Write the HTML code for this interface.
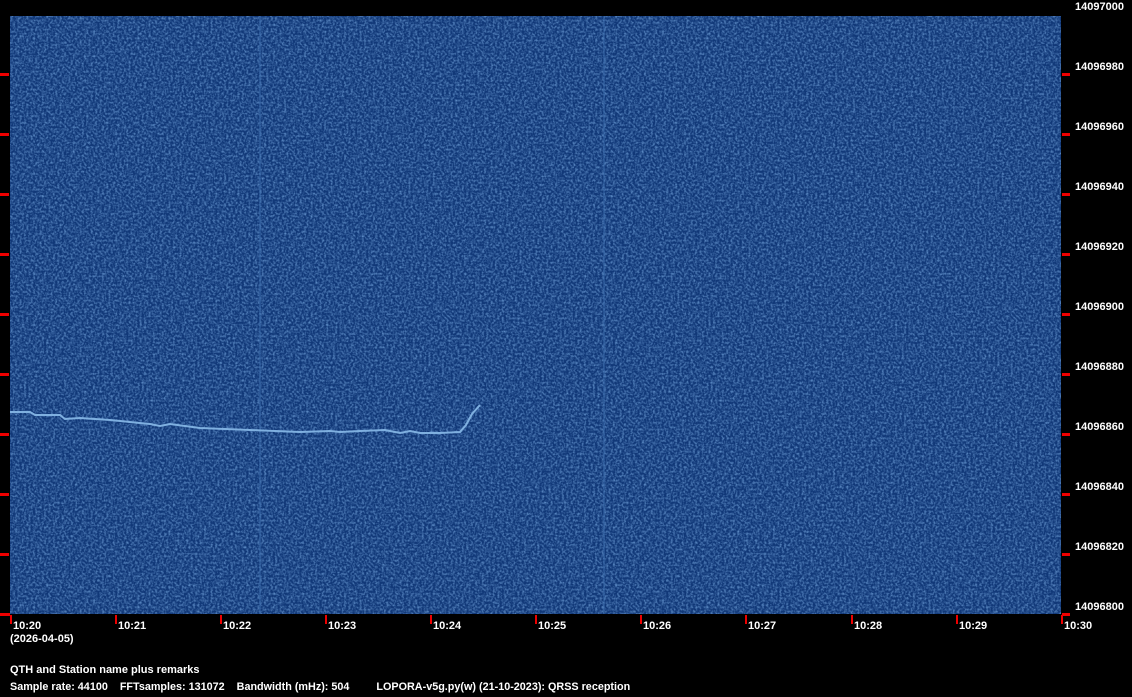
<!DOCTYPE html>
<html><head><style>
html,body{margin:0;padding:0;background:#000;width:1132px;height:697px;overflow:hidden}
.t{position:absolute;color:#fff;font:bold 11px "Liberation Sans",sans-serif;white-space:pre;line-height:12px}
</style></head><body>
<svg width="1132" height="697" style="position:absolute;left:0;top:0">
<defs>
<filter id="n" x="0" y="0" width="100%" height="100%">
<feTurbulence type="fractalNoise" baseFrequency="0.45" numOctaves="2" seed="3"/>
<feColorMatrix type="matrix" values="0 0 0 0 0.2  0 0 0 0 0.42  0 0 0 0 0.78  2 0 0 0 -0.75"/>
</filter>
</defs>
<rect x="10" y="16" width="1051" height="598" fill="#113878"/>
<rect x="10" y="16" width="1051" height="598" filter="url(#n)" opacity="0.7"/>
<line x1="260" y1="16" x2="260" y2="614" stroke="#3f70b0" stroke-width="1.5" opacity="0.6"/>
<line x1="604" y1="16" x2="604" y2="614" stroke="#3f70b0" stroke-width="1.5" opacity="0.6"/>
<polyline fill="none" stroke="#7fb0e0" stroke-width="2" points="10,412 30,412 35,415 60,415 65,419 80,418 110,420 150,424 160,426 170,424 200,428 250,430 300,432 330,431 340,432 360,431 385,430 400,433 410,431 420,433 440,433 460,432 466,425 472,414 480,405"/>
<g fill="#ee0000" shape-rendering="crispEdges">
<rect x="0" y="73" width="9" height="3"/><rect x="0" y="133" width="9" height="3"/><rect x="0" y="193" width="9" height="3"/><rect x="0" y="253" width="9" height="3"/><rect x="0" y="313" width="9" height="3"/><rect x="0" y="373" width="9" height="3"/><rect x="0" y="433" width="9" height="3"/><rect x="0" y="493" width="9" height="3"/><rect x="0" y="553" width="9" height="3"/><rect x="0" y="613" width="10" height="3"/>
<rect x="1062" y="73" width="8" height="3"/><rect x="1062" y="133" width="8" height="3"/><rect x="1062" y="193" width="8" height="3"/><rect x="1062" y="253" width="8" height="3"/><rect x="1062" y="313" width="8" height="3"/><rect x="1062" y="373" width="8" height="3"/><rect x="1062" y="433" width="8" height="3"/><rect x="1062" y="493" width="8" height="3"/><rect x="1062" y="553" width="8" height="3"/><rect x="1062" y="613" width="8" height="3"/>
<rect x="10" y="615" width="2" height="9"/><rect x="115" y="615" width="2" height="9"/><rect x="220" y="615" width="2" height="9"/><rect x="325" y="615" width="2" height="9"/><rect x="430" y="615" width="2" height="9"/><rect x="535" y="615" width="2" height="9"/><rect x="640" y="615" width="2" height="9"/><rect x="745" y="615" width="2" height="9"/><rect x="851" y="615" width="2" height="9"/><rect x="956" y="615" width="2" height="9"/><rect x="1061" y="615" width="2" height="9"/>
</g>
</svg>
<div class="t" style="left:1075px;top:1px">14097000</div>
<div class="t" style="left:1075px;top:61px">14096980</div>
<div class="t" style="left:1075px;top:121px">14096960</div>
<div class="t" style="left:1075px;top:181px">14096940</div>
<div class="t" style="left:1075px;top:241px">14096920</div>
<div class="t" style="left:1075px;top:301px">14096900</div>
<div class="t" style="left:1075px;top:361px">14096880</div>
<div class="t" style="left:1075px;top:421px">14096860</div>
<div class="t" style="left:1075px;top:481px">14096840</div>
<div class="t" style="left:1075px;top:541px">14096820</div>
<div class="t" style="left:1075px;top:601px">14096800</div>
<div class="t" style="left:13px;top:620px">10:20</div>
<div class="t" style="left:118px;top:620px">10:21</div>
<div class="t" style="left:223px;top:620px">10:22</div>
<div class="t" style="left:328px;top:620px">10:23</div>
<div class="t" style="left:433px;top:620px">10:24</div>
<div class="t" style="left:538px;top:620px">10:25</div>
<div class="t" style="left:643px;top:620px">10:26</div>
<div class="t" style="left:748px;top:620px">10:27</div>
<div class="t" style="left:854px;top:620px">10:28</div>
<div class="t" style="left:959px;top:620px">10:29</div>
<div class="t" style="left:1064px;top:620px">10:30</div>
<div class="t" style="left:10px;top:633px">(2026-04-05)</div>
<div class="t" style="left:10px;top:664px">QTH and Station name plus remarks</div>
<div class="t" style="left:10px;top:681px;font-size:10.8px">Sample rate: 44100    FFTsamples: 131072    Bandwidth (mHz): 504         LOPORA-v5g.py(w) (21-10-2023): QRSS reception</div>
</body></html>
